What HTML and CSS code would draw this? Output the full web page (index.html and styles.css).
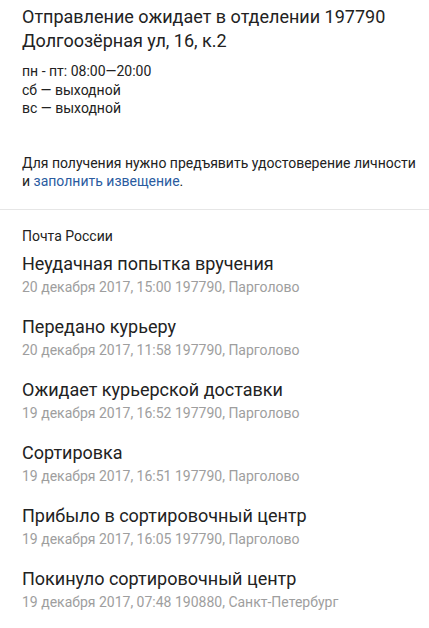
FILE: index.html
```html
<!DOCTYPE html>
<html lang="ru">
<head>
<meta charset="utf-8">
<link rel="stylesheet" href="styles.css">
</head>
<body>
<section class="office">
  <h1 class="office-title">Отправление ожидает в отделении 197790 Долгоозёрная ул, 16, к.2</h1>
  <div class="hours">
    <div>пн - пт: 08:00—20:00</div>
    <div>сб — выходной</div>
    <div>вс — выходной</div>
  </div>
  <p class="notice">Для получения нужно предъявить удостоверение личности и <a href="#" class="link">заполнить извещение</a>.</p>
</section>
<section class="history">
  <div class="carrier">Почта России</div>
  <ul class="events">
    <li class="event"><div class="event-title">Неудачная попытка вручения</div><div class="event-meta">20 декабря 2017, 15:00 197790, Парголово</div></li>
    <li class="event"><div class="event-title">Передано курьеру</div><div class="event-meta">20 декабря 2017, 11:58 197790, Парголово</div></li>
    <li class="event"><div class="event-title">Ожидает курьерской доставки</div><div class="event-meta">19 декабря 2017, 16:52 197790, Парголово</div></li>
    <li class="event"><div class="event-title">Сортировка</div><div class="event-meta">19 декабря 2017, 16:51 197790, Парголово</div></li>
    <li class="event"><div class="event-title">Прибыло в сортировочный центр</div><div class="event-meta">19 декабря 2017, 16:05 197790, Парголово</div></li>
    <li class="event"><div class="event-title">Покинуло сортировочный центр</div><div class="event-meta">19 декабря 2017, 07:48 190880, Санкт-Петербург</div></li>
  </ul>
</section>
</body>
</html>
```
FILE: styles.css
```css
* { box-sizing: border-box; }
html, body { margin: 0; padding: 0; background: #fff; }
body {
  font-family: Roboto, "Noto Sans", sans-serif;
  color: #222;
  width: 429px;
}
.office {
  padding: 5px 8px 18.8px 22px;
  border-bottom: 1px solid #e6e6e6;
}
.office-title {
  margin: 0;
  font-size: 18px;
  line-height: 24px;
  font-weight: 400;
  width: 370px;
}
.hours {
  margin-top: 9px;
  font-size: 14px;
  line-height: 18.5px;
}
.notice {
  margin: 36.7px 0 0;
  font-size: 14px;
  line-height: 18px;
}
.link { color: #2a5b9f; text-decoration: none; }
.history { padding: 16.9px 22px 0; }
.carrier { font-size: 14px; line-height: 18px; }
.events {
  list-style: none;
  margin: 7px 0 0;
  padding: 0;
  display: flex;
  flex-direction: column;
  gap: 19px;
}
.event { display: flex; flex-direction: column; gap: 2px; }
.event-title { font-size: 18px; line-height: 24px; }
.event-meta {
  font-size: 14px;
  line-height: 18px;
  color: #9e9e9e;
}
```
